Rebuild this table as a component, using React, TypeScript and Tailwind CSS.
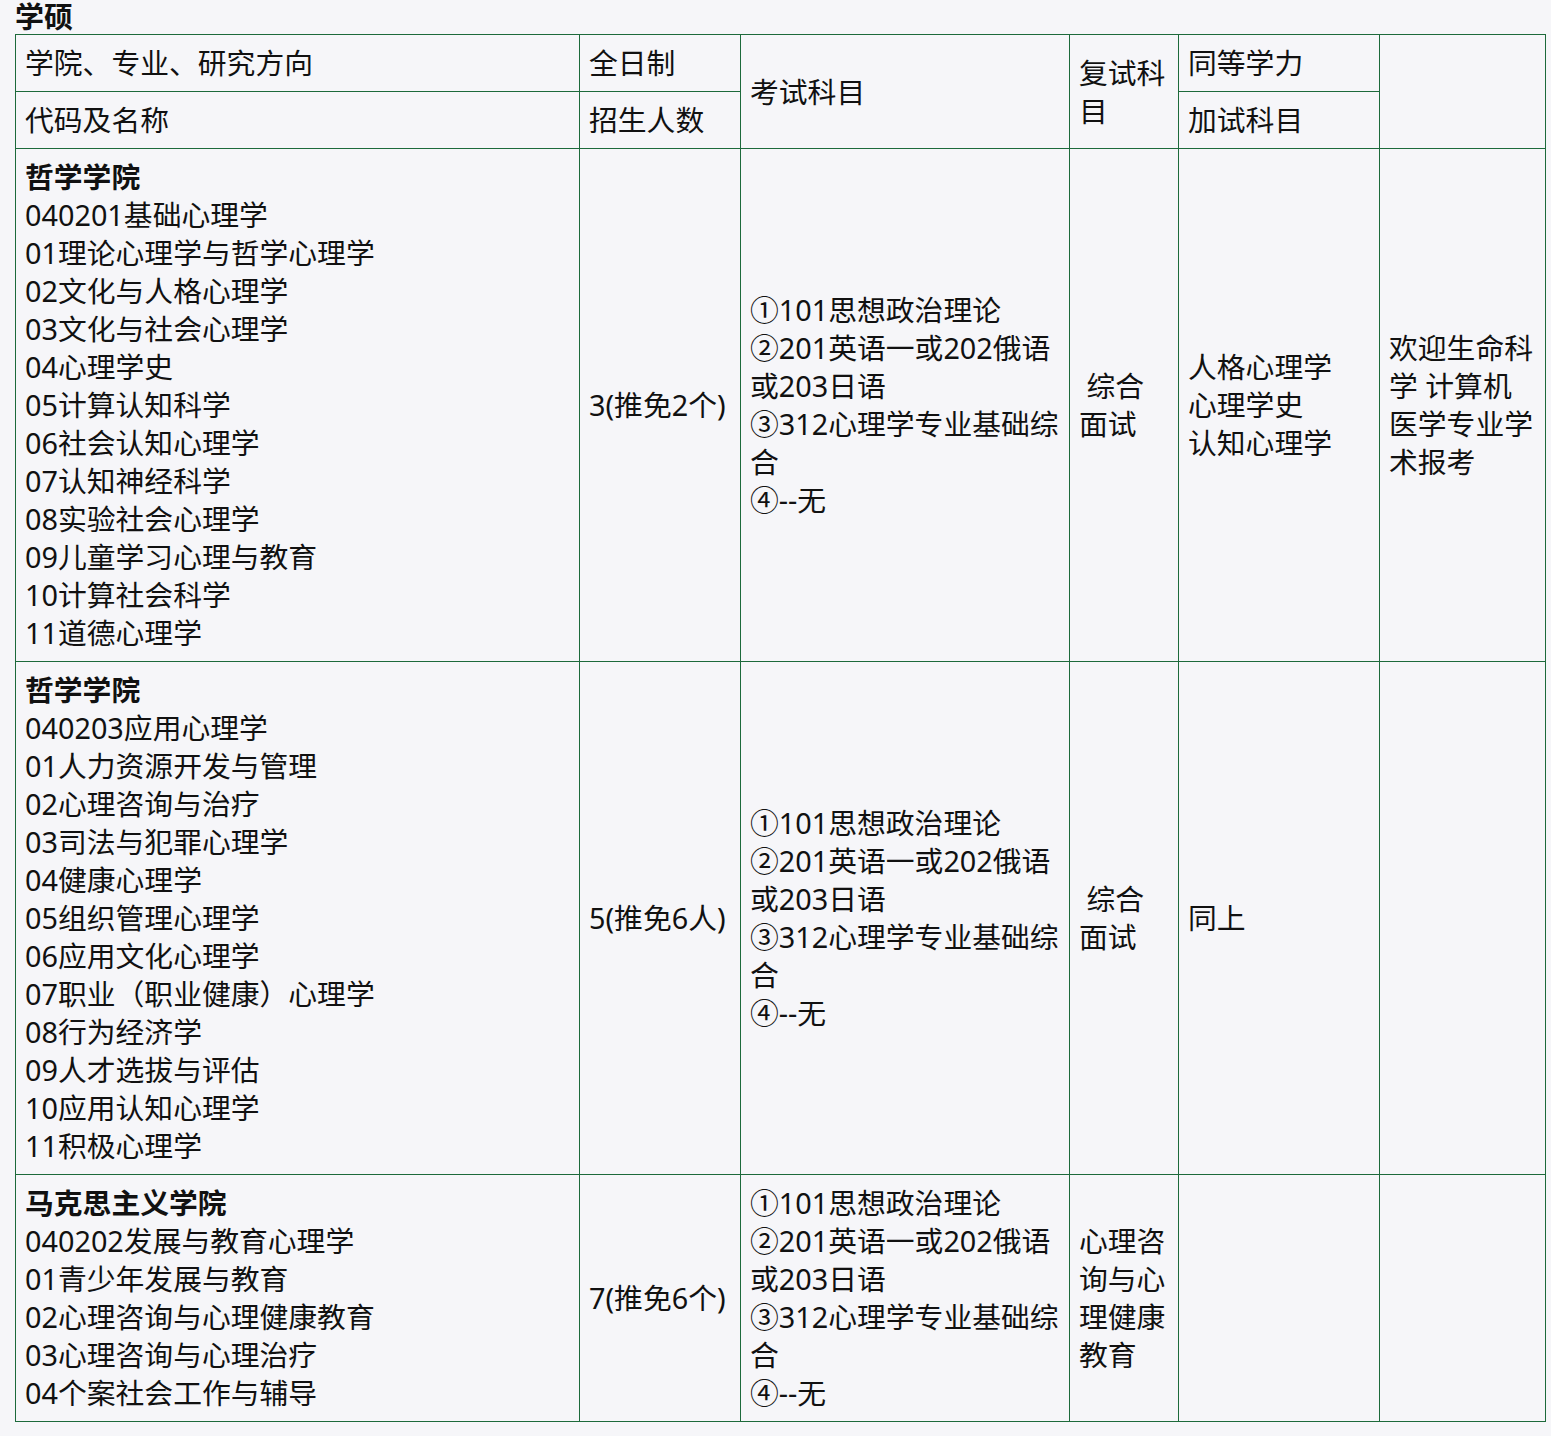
import React from 'react';

type Row = {
  college: string;
  lines: string[];
  quota: string;
  exam: string[];
  retest: string[];
  extra: string[];
  note: string[];
};

const exam = ['①101思想政治理论', '②201英语一或202俄语', '或203日语', '③312心理学专业基础综', '合', '④--无'];

const rows: Row[] = [
  {
    college: '哲学学院',
    lines: [
      '040201基础心理学',
      '01理论心理学与哲学心理学',
      '02文化与人格心理学',
      '03文化与社会心理学',
      '04心理学史',
      '05计算认知科学',
      '06社会认知心理学',
      '07认知神经科学',
      '08实验社会心理学',
      '09儿童学习心理与教育',
      '10计算社会科学',
      '11道德心理学',
    ],
    quota: '3(推免2个)',
    exam,
    retest: ['\u00a0综合', '面试'],
    extra: ['人格心理学', '心理学史', '认知心理学'],
    note: ['欢迎生命科', '学 计算机', '医学专业学', '术报考'],
  },
  {
    college: '哲学学院',
    lines: [
      '040203应用心理学',
      '01人力资源开发与管理',
      '02心理咨询与治疗',
      '03司法与犯罪心理学',
      '04健康心理学',
      '05组织管理心理学',
      '06应用文化心理学',
      '07职业（职业健康）心理学',
      '08行为经济学',
      '09人才选拔与评估',
      '10应用认知心理学',
      '11积极心理学',
    ],
    quota: '5(推免6人)',
    exam,
    retest: ['\u00a0综合', '面试'],
    extra: ['同上'],
    note: [],
  },
  {
    college: '马克思主义学院',
    lines: [
      '040202发展与教育心理学',
      '01青少年发展与教育',
      '02心理咨询与心理健康教育',
      '03心理咨询与心理治疗',
      '04个案社会工作与辅导',
    ],
    quota: '7(推免6个)',
    exam,
    retest: ['心理咨', '询与心', '理健康', '教育'],
    extra: [],
    note: [],
  },
];

const cell = 'border border-[#1d6a3b] px-[9px] py-[9px] align-middle text-left font-normal';

const Lines: React.FC<{ items: string[] }> = ({ items }) => (
  <>
    {items.map((t, i) => (
      <div key={i} className="whitespace-pre">{t}</div>
    ))}
  </>
);

const App: React.FC = () => {
  return (
    <div
      className="min-h-[1436px] bg-[#f6f6f9] text-[#111] pl-[15px]"
      style={{ fontFamily: '"Noto Sans", "Noto Sans CJK SC", sans-serif' }}
    >
      <div className="h-[34px] text-[29px] leading-[34px] font-bold">学硕</div>
      <table className="w-[1530px] table-fixed border-collapse text-[28.8px] leading-[38px]">
        <colgroup>
          <col className="w-[564px]" />
          <col className="w-[161px]" />
          <col className="w-[329px]" />
          <col className="w-[109px]" />
          <col className="w-[201px]" />
          <col className="w-[166px]" />
        </colgroup>
        <thead>
          <tr>
            <th className={cell}>学院、专业、研究方向</th>
            <th className={cell}>全日制</th>
            <th className={cell} rowSpan={2}>考试科目</th>
            <th className={cell} rowSpan={2}>
              <Lines items={['复试科', '目']} />
            </th>
            <th className={cell}>同等学力</th>
            <th className={cell} rowSpan={2}></th>
          </tr>
          <tr>
            <th className={cell}>代码及名称</th>
            <th className={cell}>招生人数</th>
            <th className={cell}>加试科目</th>
          </tr>
        </thead>
        <tbody>
          {rows.map((r, i) => (
            <tr key={i}>
              <td className={cell}>
                <div className="font-bold">{r.college}</div>
                <Lines items={r.lines} />
              </td>
              <td className={cell}>{r.quota}</td>
              <td className={cell}>
                <Lines items={r.exam} />
              </td>
              <td className={cell}>
                <Lines items={r.retest} />
              </td>
              <td className={cell}>
                <Lines items={r.extra} />
              </td>
              <td className={cell}>
                <Lines items={r.note} />
              </td>
            </tr>
          ))}
        </tbody>
      </table>
    </div>
  );
};

export default App;
